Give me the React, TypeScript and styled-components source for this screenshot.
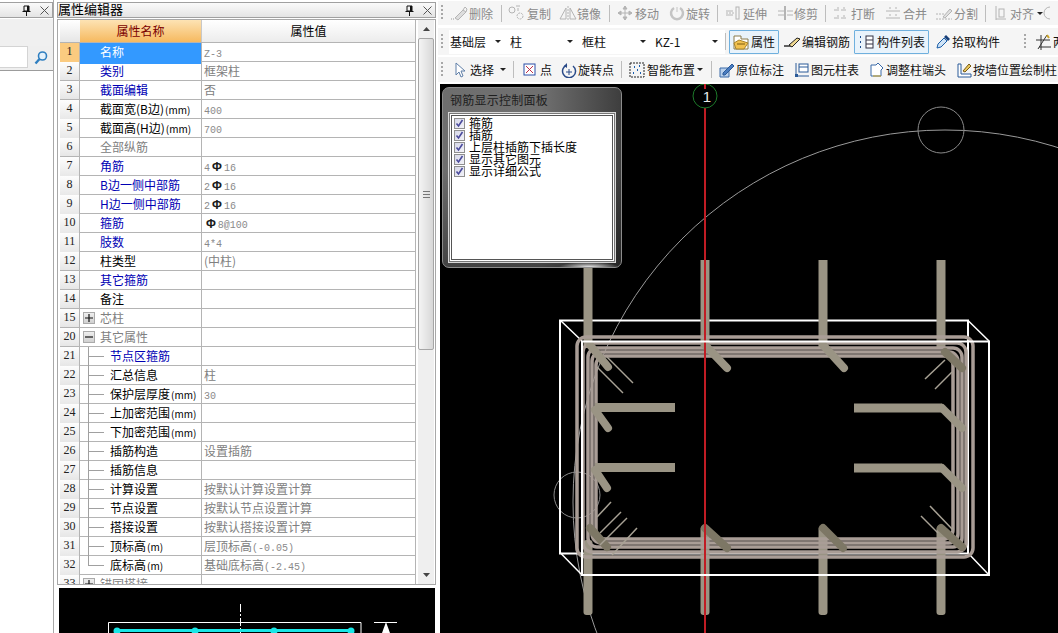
import React from 'react';
import styled, { createGlobalStyle } from 'styled-components';

const Global = createGlobalStyle`
  html, body { margin: 0; padding: 0; width: 1058px; height: 633px; overflow: hidden; background: #fff; }
  body { font-family: "Noto Sans CJK SC", "Liberation Sans", sans-serif; font-size: 12px; color: #000; }
  * { box-sizing: border-box; }
`;

const Shell = styled.div`display: flex; width: 1058px; height: 633px; overflow: hidden;`;

/* ---------- docked pane chrome ---------- */
const Sidebar = styled.aside`
  width: 54px; flex: none; border-right: 1px solid #a8a8a8; display: flex; flex-direction: column; padding-top: 2px;
`;
const TitleBar = styled.div`
  height: 16px; flex: none; display: flex; align-items: center; justify-content: flex-end;
  background: linear-gradient(#fafafa, #e4e4e4); border: 1px solid #a0a0a0; border-left-width: ${p => p.$flushLeft ? 0 : 1}px;
  font-size: 13px; line-height: 14px; color: #000; padding-right: 3px; gap: 9px; margin-bottom: 1px;
`;
const TitleText = styled.span`margin-right: auto; margin-top: -2px; white-space: nowrap;`;
const SideTools = styled.div`height: 27px; background: #f0f0f0; flex: none;`;
const SearchRow = styled.div`
  height: 25px; flex: none; display: flex; background: #efefef; border-bottom: 1px solid #9c9c9c;
`;
const SearchInput = styled.div`width: 28px; height: 22px; background: #fff; border: 1px solid #d4d4d4; border-left: 0;`;
const SearchButton = styled.div`flex: 1; display: flex; align-items: center; justify-content: center;`;

const PropertyColumn = styled.section`
  width: 384px; flex: none; display: flex; flex-direction: column; padding: 2px 2px 0 3px;
`;
const GridFrame = styled.div`
  height: 566px; flex: none; display: flex; border: 1px solid #a8a8a8; padding-left: 2px; overflow: hidden;
`;
const Grid = styled.div`width: 356px; flex: none; overflow: hidden; border-right: 1px solid #b4b4b4;`;
const Row = styled.div`
  display: grid; grid-template-columns: 20px 121px 214px; height: 19px; border-bottom: 1px solid #b4b4b4;
`;
const HeadRow = styled(Row)`height: 23px;`;
const HeadName = styled.div`
  background: linear-gradient(#fde3b4, #f6b95f); color: #7a0000; text-align: center; line-height: 21px;
`;
const HeadValue = styled.div`
  background: linear-gradient(#fff, #ececec); text-align: center; line-height: 21px; border-left: 1px solid #c8c8c8;
`;
const HeadCorner = styled.div`background: linear-gradient(#fff, #e6e6e6);`;
const NumCell = styled.div`
  background: ${p => p.$active ? '#fbcb80' : 'linear-gradient(#fdfdfd, #e6e6e6)'};
  font-size: 12px; line-height: 17px; text-align: center; color: #222; border-right: 1px solid #b4b4b4;
  font-family: "Liberation Serif", serif;
`;
const toneColor = { blue: '#0000b4', black: '#000', gray: '#808080', white: '#fff' };
const NameCell = styled.div`
  display: flex; align-items: stretch; padding-left: 20px; line-height: 18px; white-space: nowrap;
  color: ${p => toneColor[p.$tone]};
  background: ${p => p.$active ? '#3399ff' : 'transparent'};
  &[data-tree='true'] { padding-left: 8px; }
  &[data-exp='true'] { padding-left: 3px; }
`;
const Unit = styled.span`font-size: 10px; margin-left: 1px;`;
const Expander = styled.span`
  width: 12px; height: 12px; margin: 3px 5px 0 0; flex: none; border: 1px solid #aaa; background: linear-gradient(#eee, #d0d0d0);
  display: flex; align-items: center; justify-content: center; color: #111;
`;
const TreeGuide = styled.span`
  width: 22px; flex: none; border-left: 1px solid #a0a0a0; height: ${p => p.$last ? '10px' : '19px'};
  display: flex; align-items: ${p => p.$last ? 'flex-end' : 'center'};
  &::after { content: ''; display: block; width: 15px; height: 1px; background: #a0a0a0; }
`;
const ValueCell = styled.div`
  padding-left: 2px; line-height: 18px; color: #808080; white-space: nowrap; border-left: 1px solid #b4b4b4;
`;
const Mono = styled.span`font-family: "Liberation Mono", monospace; font-size: 10px; color: #8a8a8a;`;
const Steel = styled.span`color: #1a1a1a; font-size: 12px; padding: 0 2px; font-family: "Liberation Sans", sans-serif; font-weight: 700;`;

const Scrollbar = styled.div`
  width: 16px; margin-left: 2px; flex: none; display: flex; flex-direction: column; background: #efefef;
`;
const ScrollArrow = styled.div`height: 18px; flex: none; display: flex; align-items: center; justify-content: center;`;
const ScrollThumb = styled.div`
  height: 312px; flex: none; border: 1px solid #a6a6a6; border-radius: 2px; background: linear-gradient(90deg, #f4f4f4, #d8d8d8);
  display: flex; align-items: center; justify-content: center;
`;
const ScrollSpace = styled.div`flex: 1;`;
const ThumbGrip = styled.div`width: 7px; height: 7px; border-top: 1px solid #777; border-bottom: 1px solid #777;
  &::after { content: ''; display: block; height: 1px; margin-top: 2px; background: #777; }
`;
const Preview = styled.div`margin: 3px 1px 0 2px; flex: 1; background: #000; overflow: hidden;`;

/* ---------- main column ---------- */
const Main = styled.main`flex: 1; min-width: 0; display: flex; flex-direction: column; background: #fff; overflow: hidden;`;
const Toolbar = styled.div`
  display: flex; align-items: center; flex: none; height: ${p => p.$h}px; margin-top: ${p => p.$mt}px; padding-left: 3px;
  background: #f5f5f5; white-space: nowrap; color: ${p => p.$dim ? '#8a8a8a' : '#111'};
`;
const Grip = styled.span`
  width: 2px; height: 16px; margin-right: 6px; flex: none; margin-left: ${p => p.$ml || 0}px;
  background: repeating-linear-gradient(#a8a8a8 0 2px, transparent 2px 4px);
`;
const Tool = styled.span`display: inline-flex; align-items: center; flex: none; width: ${p => p.$w}px; height: 24px;`;
const ToolIcon = styled.span`
  width: ${p => p.$w}px; flex: none; display: flex; align-items: center; justify-content: center;
`;
const ActiveTool = styled(Tool)`
  border: 1px solid #6fb0de; background: #e9f3fb; height: 24px; border-radius: 1px;
`;
const Sep = styled.span`width: 1px; height: 17px; flex: none; background: #bdbdbd; margin: 0 ${p => p.$r ?? 5}px 0 0;`;
const Caret = styled.span`
  width: 0; height: 0; flex: none; margin-left: ${p => p.$ml}px; border: 3px solid transparent; border-top: 3px solid #222; border-bottom: 0;
`;
const Combo = styled.span`
  display: inline-flex; align-items: center; justify-content: space-between; flex: none; width: ${p => p.$w}px; height: 24px;
  background: #fff; padding: 0 7px 0 ${p => p.$pl}px;
`;

const Canvas = styled.div`flex: 1; margin: 2px 0 0 2px; background: #000; position: relative; overflow: hidden;`;
const CanvasArt = styled.svg`display: block; width: 618px; height: 549px;`;

const Floating = styled.div`
  position: absolute; left: 2px; top: 3px; width: 180px; height: 181px; border-radius: 7px; border: 1px solid #8c8c8c;
  background:
    radial-gradient(30px 5px at 82% 100%, #e8e8e8, transparent),
    linear-gradient(180deg, transparent 45%, rgba(0, 0, 0, 0.4) 100%),
    linear-gradient(90deg, #6e6e6e 0%, #707070 55%, #3e3e3e 100%);
  padding: 4px 6px 5px 6px; display: flex; flex-direction: column;
`;
const FloatingTitle = styled.div`height: 21px; font-size: 12px; letter-spacing: 0.25px; line-height: 16px; color: #1e1e1e; padding-left: 1px; white-space: nowrap;`;
const FloatingBody = styled.div`
  flex: 1; background: #fff; border: 1px solid #fff; outline: 1px solid #777; box-shadow: inset 0 0 0 1px #555, 0 0 0 2px #d8d8d8;
  padding: 2px 3px; margin: 1px;
`;
const CheckRow = styled.label`display: flex; align-items: center; height: 12px; line-height: 12px; white-space: nowrap; color: #000; gap: 4px;`;
const CheckBox = styled.span`
  width: 11px; height: 11px; flex: none; border: 1px solid #8f8f8f; background: linear-gradient(135deg, #d6d8e8, #f3f3f8);
  display: flex; align-items: center; justify-content: center;
`;

/* ---------- little icons ---------- */
const Svg = ({ w = 16, h = 16, children }: any) => <svg width={w} height={h} viewBox={`0 0 ${w} ${h}`} fill="none">{children}</svg>;
const G = '#b4b4b4';
const ic: Record<string, React.ReactNode> = {
  del: <Svg w={18}><path d="M1 14h4" stroke="#999" strokeDasharray="1 1" /><path d="M5 13l8-8 3 2-8 8z" fill="#ddd" stroke={G} /><path d="M13 5l2-3 2 2-1 3" stroke={G} /></Svg>,
  copy: <Svg w={18}><circle cx="4" cy="5" r="3" stroke={G} /><circle cx="12" cy="11" r="3" stroke={G} strokeDasharray="2 1" /><path d="M8 1h4M10 3v3" stroke={G} /></Svg>,
  mirror: <Svg w={18}><path d="M1 14L7 3v11zM17 14L11 3v11z" stroke={G} /><path d="M9 1v15" stroke={G} strokeDasharray="2 1" /></Svg>,
  move: <Svg><path d="M8 1v14M1 8h14M8 1L6 4h4zM8 15l-2-3h4zM1 8l3-2v4zM15 8l-3-2v4z" stroke={G} fill={G} /></Svg>,
  rotate: <Svg><path d="M5 3a6 6 0 1 0 6 0" stroke="#c4c4c4" strokeWidth="2.5" /><path d="M8 2v5" stroke="#ddd" strokeWidth="2" /></Svg>,
  extend: <Svg><path d="M1 8h8" stroke={G} strokeDasharray="2 1" /><path d="M1 6h7M1 10h7" stroke={G} /><rect x="11" y="2" width="3" height="12" stroke={G} /></Svg>,
  trim: <Svg><path d="M8 1v14" stroke={G} strokeWidth="2" /><path d="M1 6h6M1 10h6M10 6h6M10 10h6" stroke={G} /></Svg>,
  brk: <Svg><path d="M1 5h14M1 13h14" stroke={G} strokeDasharray="5 2" /><path d="M5 2v2M11 2v2M5 10v2M11 10v2" stroke={G} /></Svg>,
  merge: <Svg><path d="M1 6h14M1 13h14" stroke={G} /><path d="M5 2v2M11 2v2M5 9v2M11 9v2" stroke={G} /></Svg>,
  split: <Svg w={18}><path d="M1 14h16M1 9h8" stroke={G} strokeDasharray="2 1" /><path d="M8 12l7-8 2 2-7 7z" stroke={G} fill="#e0e0e0" /></Svg>,
  align: <Svg w={12}><path d="M1 1v14M1 14h10" stroke={G} /><rect x="4" y="4" width="5" height="8" stroke={G} /></Svg>,
  refresh: <Svg w={8}><circle cx="8" cy="8" r="6" stroke={G} /></Svg>,
  folder: <Svg w={18}><path d="M2 2h7v3h7v10H2z" fill="#fff" stroke="#8a7a4a" /><path d="M2 9l5-3 9 3-4 6H4z" fill="#f2c14e" stroke="#a8842c" /><path d="M5 10h8" stroke="#7a5a10" /></Svg>,
  pen: <Svg w={18}><path d="M1 12h7" stroke="#222" strokeWidth="1.4" /><path d="M6 11l8-7 3 1-8 8z" fill="#f0d890" stroke="#222" /></Svg>,
  list: <Svg w={18}><path d="M3 3h2M3 8h2M3 13h2" stroke="#1d4f91" strokeWidth="2" strokeDasharray="1 1" /><rect x="9" y="2" width="7" height="12" fill="#fff" stroke="#334" /><path d="M9 6h7M9 10h7" stroke="#334" /></Svg>,
  dropper: <Svg><path d="M2 14l1-4 6-6 3 3-6 6z" fill="#cfe3f6" stroke="#1c5fa8" /><path d="M9 3l2-2 4 4-2 2z" fill="#173f78" /></Svg>,
  cross: <Svg><path d="M1 6h14M4 13h12M6 1v15M12 1L3 15" stroke="#333" /><path d="M12 1l2 3" stroke="#c9a227" strokeWidth="2" /></Svg>,
  cursor: <Svg w={12}><path d="M2 1v12l3-3 2 5 2-1-2-5h4z" fill="#fff" stroke="#5f7fa8" /></Svg>,
  point: <Svg w={13}><rect x="1" y="2" width="11" height="11" fill="#fff" stroke="#2a4fa8" /><path d="M3 4l7 7M10 4l-7 7" stroke="#c03048" /></Svg>,
  rotpt: <Svg w={18}><path d="M7 3a6.5 6.5 0 1 0 6 1" stroke="#2a4a88" strokeWidth="1.5" /><path d="M7 1v5l-3-2z" fill="#2a4a88" /><path d="M9 7v6M6 10h6" stroke="#2a4a88" /></Svg>,
  smart: <Svg><rect x="1" y="1" width="14" height="14" fill="#f4f4f4" stroke="#222" strokeDasharray="2 1" /><path d="M5 5h1M10 4h1M8 8h1M4 11h1M11 11h1" stroke="#1a5fb0" strokeWidth="2" /></Svg>,
  orig: <Svg><path d="M1 6h9v9H1z" fill="#b9d0ec" stroke="#3a6aa8" /><path d="M4 11l9-9 2 2-9 9H4z" fill="#4a7cc0" stroke="#2a5a98" /></Svg>,
  table: <Svg><path d="M2 1v13h13" stroke="#2a5a98" /><rect x="1" y="12" width="3" height="3" fill="#2a5a98" /><rect x="5" y="2" width="9" height="8" fill="#fff" stroke="#2a5a98" /><path d="M5 5h9" stroke="#2a5a98" /></Svg>,
  end: <Svg><path d="M2 3h5l2-2 5 5-2 2v6H2z" fill="#fff" stroke="#3a6aa8" /><path d="M4 14h8" stroke="#c9a227" /></Svg>,
  wall: <Svg><path d="M2 2h3v10h10v3H2z" fill="#fff" stroke="#2a5a98" /><path d="M7 9l6-7 2 2-6 6z" fill="#e8c860" stroke="#7a5a10" /></Svg>,
};

const Item = ({ i, iw, w, children, caret }: any) => (
  <Tool $w={w}><ToolIcon $w={iw}>{ic[i]}</ToolIcon>{children}{caret != null && <Caret $ml={caret} />}</Tool>
);

type R = { n: number; label: string; unit?: string; tone: string; value?: React.ReactNode; tree?: boolean; last?: boolean; exp?: '+' | '-' };
const S = () => <Steel>Φ</Steel>;
const rows: R[] = [
  { n: 1, label: '名称', tone: 'white', value: <Mono>Z-3</Mono> },
  { n: 2, label: '类别', tone: 'blue', value: '框架柱' },
  { n: 3, label: '截面编辑', tone: 'blue', value: '否' },
  { n: 4, label: '截面宽(B边)', unit: '(mm)', tone: 'black', value: <Mono>400</Mono> },
  { n: 5, label: '截面高(H边)', unit: '(mm)', tone: 'black', value: <Mono>700</Mono> },
  { n: 6, label: '全部纵筋', tone: 'gray' },
  { n: 7, label: '角筋', tone: 'blue', value: <Mono>4<S />16</Mono> },
  { n: 8, label: 'B边一侧中部筋', tone: 'blue', value: <Mono>2<S />16</Mono> },
  { n: 9, label: 'H边一侧中部筋', tone: 'blue', value: <Mono>2<S />16</Mono> },
  { n: 10, label: '箍筋', tone: 'blue', value: <Mono><S />8@100</Mono> },
  { n: 11, label: '肢数', tone: 'blue', value: <Mono>4*4</Mono> },
  { n: 12, label: '柱类型', tone: 'black', value: '(中柱)' },
  { n: 13, label: '其它箍筋', tone: 'blue' },
  { n: 14, label: '备注', tone: 'black' },
  { n: 15, label: '芯柱', tone: 'gray', exp: '+' },
  { n: 20, label: '其它属性', tone: 'gray', exp: '-' },
  { n: 21, label: '节点区箍筋', tone: 'blue', tree: true },
  { n: 22, label: '汇总信息', tone: 'black', tree: true, value: '柱' },
  { n: 23, label: '保护层厚度', unit: '(mm)', tone: 'black', tree: true, value: <Mono>30</Mono> },
  { n: 24, label: '上加密范围', unit: '(mm)', tone: 'black', tree: true },
  { n: 25, label: '下加密范围', unit: '(mm)', tone: 'black', tree: true },
  { n: 26, label: '插筋构造', tone: 'black', tree: true, value: '设置插筋' },
  { n: 27, label: '插筋信息', tone: 'black', tree: true },
  { n: 28, label: '计算设置', tone: 'black', tree: true, value: '按默认计算设置计算' },
  { n: 29, label: '节点设置', tone: 'black', tree: true, value: '按默认节点设置计算' },
  { n: 30, label: '搭接设置', tone: 'black', tree: true, value: '按默认搭接设置计算' },
  { n: 31, label: '顶标高', unit: '(m)', tone: 'black', tree: true, value: <>层顶标高<Mono>(-0.05)</Mono></> },
  { n: 32, label: '底标高', unit: '(m)', tone: 'black', tree: true, last: true, value: <>基础底标高<Mono>(-2.45)</Mono></> },
  { n: 33, label: '锚固搭接', tone: 'gray', exp: '+' },
];

const PinIcon = () => <svg width="9" height="11" viewBox="0 0 9 11"><path d="M2 1h5v5H2zM0.5 6.5h8M4.5 7v4" stroke="#111" fill="none" /><path d="M5 1h2v5H5z" fill="#111" /></svg>;
const CloseIcon = () => <svg width="9" height="9" viewBox="0 0 9 9"><path d="M0.5 0.5l8 8M8.5 0.5l-8 8" stroke="#555" /></svg>;
const Arrow = ({ up }: { up?: boolean }) => <svg width="7" height="4" viewBox="0 0 7 4"><path d={up ? 'M0 4h7L3.5 0z' : 'M0 0h7L3.5 4z'} fill="#444" /></svg>;

const Cage = () => {
  const bar = '#9a9484';
  const stir = '#a99d96';
  const hooks = [
    [590, 345, 608, 367], [705, 345, 727, 368], [823, 345, 844, 368], [945, 352, 962, 368],
    [595, 410, 608, 428], [595, 470, 607, 488], [942, 408, 962, 428], [942, 468, 962, 488],
    [590, 528, 607, 547], [705, 528, 727, 548], [823, 528, 843, 548], [941, 528, 962, 547],
  ];
  const thin = [
    [607, 357, 633, 383], [597, 367, 623, 393], [945, 360, 925, 379], [952, 372, 935, 389],
    [611, 502, 597, 517], [621, 512, 600, 533], [627, 518, 600, 545], [637, 528, 612, 555],
    [930, 506, 953, 530], [921, 516, 938, 533],
  ];
  return (
    <CanvasArt viewBox="440 84 618 549">
      <circle cx="945" cy="502" r="372" stroke="#9a9a9a" strokeWidth="1" fill="none" />
      <circle cx="941" cy="130" r="23" stroke="#8a8a8a" fill="none" />
      <circle cx="577" cy="495" r="23" stroke="#8a8a8a" fill="none" />
      <path d="M560.5 553L582 575M560.5 320.5L582 341M968 320.5L989 341M968 553L989 575" stroke="#fff" strokeWidth="1.5" />
      <rect x="560" y="320.5" width="408" height="233" stroke="#fff" strokeWidth="2" fill="none" />
      {[588, 705, 823, 941].map(x => <rect key={x} x={x - 4.5} y="260" width="9" height="88" fill={bar} />)}
      {[588, 705, 823, 941].map(x => <rect key={x} x={x - 4.5} y={x === 588 ? 540 : 526} width="9" height={x === 588 ? 75 : 89} rx="3" fill={bar} />)}
      {[[0, 337, 577, 973, 557], [1, 343, 583, 966, 552], [2, 348, 588, 962, 547], [3, 352, 592, 958, 543], [4, 356, 596, 953, 539]].map(([k, t, l, r, b]) => (
        <rect key={k} x={l} y={t} width={r - l} height={b - t} rx="9" fill="none" stroke={stir} strokeWidth="3.5" />
      ))}
      <path d="M595 407.5h80M595 467.5h80M854 408h88M854 468h88" stroke={bar} strokeWidth="9" />
      {hooks.map(([a, b, c, d], i) => <line key={i} x1={a} y1={b} x2={c} y2={d} stroke={i > 7 || i === 3 ? '#7d7765' : bar} strokeWidth="8" strokeLinecap="round" />)}
      {thin.map(([a, b, c, d], i) => <line key={i} x1={a} y1={b} x2={c} y2={d} stroke="#a8a295" strokeWidth="1.5" />)}
      <line x1="705" y1="84" x2="705" y2="633" stroke="#c01c24" strokeWidth="2" />
      <rect x="582" y="341.5" width="407" height="233.5" stroke="#fff" strokeWidth="2" fill="none" />
      <circle cx="705" cy="96" r="12" stroke="#1d7a2a" fill="#000" />
      <line x1="705" y1="84" x2="705" y2="89" stroke="#c01c24" strokeWidth="2" />
      <text x="707" y="102" textAnchor="middle" fill="#e8e8e8" fontSize="15" fontFamily="Liberation Sans">1</text>
    </CanvasArt>
  );
};

const checks = ['箍筋', '插筋', '上层柱插筋下插长度', '显示其它图元', '显示详细公式'];

export default function App() {
  return (
    <Shell>
      <Global />
      <Sidebar>
        <TitleBar $flushLeft><PinIcon /><CloseIcon /></TitleBar>
        <SideTools />
        <SearchRow>
          <SearchInput />
          <SearchButton>
            <svg width="16" height="16" viewBox="0 0 16 16"><circle cx="9.5" cy="6" r="4" stroke="#2f7fc0" strokeWidth="1.6" fill="#e4f1fb" /><path d="M6.5 9L2.5 13.5" stroke="#2f7fc0" strokeWidth="2.4" /></svg>
          </SearchButton>
        </SearchRow>
      </Sidebar>

      <PropertyColumn>
        <TitleBar><TitleText>属性编辑器</TitleText><PinIcon /><CloseIcon /></TitleBar>
        <GridFrame>
          <Grid>
            <HeadRow><HeadCorner /><HeadName>属性名称</HeadName><HeadValue>属性值</HeadValue></HeadRow>
            {rows.map((r, idx) => (
              <Row key={r.n}>
                <NumCell $active={idx === 0}>{r.n}</NumCell>
                <NameCell $tone={r.tone} $active={idx === 0} data-tree={!!r.tree} data-exp={!!r.exp}>
                  {r.exp && <Expander><svg width="8" height="8" viewBox="0 0 8 8"><path d={r.exp === '+' ? 'M0 4h8M4 0v8' : 'M0 4h8'} stroke="#111" strokeWidth="1.2" /></svg></Expander>}
                  {r.tree && <TreeGuide $last={r.last} />}
                  <span>{r.label}{r.unit && <Unit>{r.unit}</Unit>}</span>
                </NameCell>
                <ValueCell>{r.value}</ValueCell>
              </Row>
            ))}
          </Grid>
          <Scrollbar>
            <ScrollArrow><Arrow up /></ScrollArrow>
            <ScrollThumb><ThumbGrip /></ScrollThumb>
            <ScrollSpace />
            <ScrollArrow><Arrow /></ScrollArrow>
          </Scrollbar>
        </GridFrame>
        <Preview>
          <svg width="376" height="45" viewBox="59 588 376 45">
            <path d="M240.5 604v29" stroke="#fff" strokeDasharray="8 2 2 2" />
            <path d="M108.5 633V622.5H361V633" stroke="#fff" fill="none" />
            <path d="M116 630.5H352" stroke="#19e6e6" strokeWidth="3" />
            {[117, 195, 274, 351].map(x => <circle key={x} cx={x} cy="631" r="3.5" fill="#19e6e6" />)}
            <path d="M374 622.5h23" stroke="#fff" />
            <path d="M386 622l-4 11h8z" fill="#fff" />
          </svg>
        </Preview>
      </PropertyColumn>

      <Main>
        <Toolbar $h={24} $mt={1} $dim>
          <Grip />
          <Item i="del" iw={20} w={52}>删除</Item><Sep />
          <Item i="copy" iw={20} w={51}>复制</Item>
          <Item i="mirror" iw={19} w={51}>镜像</Item><Sep />
          <Item i="move" iw={20} w={53}>移动</Item>
          <Item i="rotate" iw={18} w={49}>旋转</Item><Sep />
          <Item i="extend" iw={20} w={52}>延伸</Item>
          <Item i="trim" iw={19} w={50}>修剪</Item><Sep />
          <Item i="brk" iw={20} w={52}>打断</Item>
          <Item i="merge" iw={20} w={50}>合并</Item>
          <Item i="split" iw={21} w={52}>分割</Item><Sep />
          <Item i="align" iw={19} w={51} caret={3}>对齐</Item>
          <ToolIcon $w={8}>{ic.refresh}</ToolIcon>
        </Toolbar>
        <Toolbar $h={27} $mt={3}>
          <Grip />
          <Combo $w={59} $pl={1}>基础层<Caret $ml={0} /></Combo>
          <Combo $w={72} $pl={2}>柱<Caret $ml={0} /></Combo>
          <Combo $w={73} $pl={2}>框柱<Caret $ml={0} /></Combo>
          <Combo $w={72} $pl={2}>KZ-1<Caret $ml={0} /></Combo>
          <Sep $r={3} />
          <ActiveTool $w={50}><ToolIcon $w={21}>{ic.folder}</ToolIcon>属性</ActiveTool>
          <Tool $w={3} />
          <Item i="pen" iw={20} w={72}>编辑钢筋</Item>
          <ActiveTool $w={75}><ToolIcon $w={22}>{ic.list}</ToolIcon>构件列表</ActiveTool>
          <Tool $w={5} />
          <Item i="dropper" iw={18} w={70}>拾取构件</Item>
          <Grip $ml={20} />
          <Item i="cross" iw={21} w={30}>两</Item>
        </Toolbar>
        <Toolbar $h={25} $mt={2}>
          <Grip />
          <Tool $w={1} />
          <Item i="cursor" iw={20} w={63} caret={6}>选择</Item><Sep />
          <Item i="point" iw={21} w={40}>点</Item>
          <Item i="rotpt" iw={19} w={62}>旋转点</Item><Sep />
          <Item i="smart" iw={20} w={84} caret={2}>智能布置</Item><Sep />
          <Item i="orig" iw={19} w={75}>原位标注</Item>
          <Item i="table" iw={19} w={75}>图元柱表</Item>
          <Item i="end" iw={19} w={87}>调整柱端头</Item>
          <Item i="wall" iw={19} w={104}>按墙位置绘制柱</Item>
        </Toolbar>
        <Canvas>
          <Cage />
          <Floating>
            <FloatingTitle>钢筋显示控制面板</FloatingTitle>
            <FloatingBody>
              {checks.map(c => (
                <CheckRow key={c}>
                  <CheckBox><svg width="9" height="9" viewBox="0 0 9 9"><path d="M1.5 4.5l2 2.5 4-6" stroke="#4a4a9c" strokeWidth="1.6" fill="none" /></svg></CheckBox>
                  {c}
                </CheckRow>
              ))}
            </FloatingBody>
          </Floating>
        </Canvas>
      </Main>
    </Shell>
  );
}
